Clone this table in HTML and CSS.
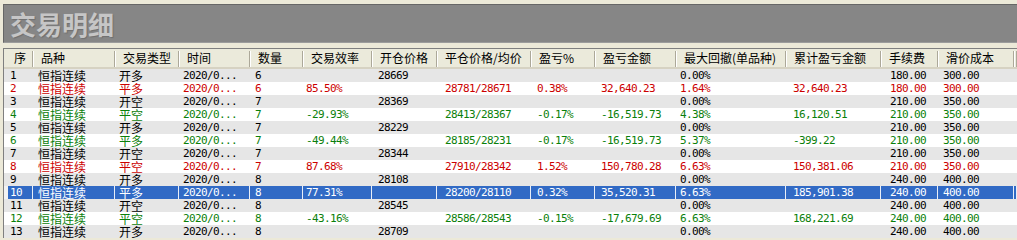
FILE: index.html
```html
<!DOCTYPE html>
<html lang="zh-CN">
<head>
<meta charset="utf-8">
<title>交易明细</title>
<link rel="stylesheet" href="styles.css">
</head>
<body>
<div class="window">
  <div class="title">交易明细</div>
  <div class="grid-wrap">
    <table class="grid">
      <colgroup>
        <col class="w1"><col class="w2"><col class="w3"><col class="w4"><col class="w5"><col class="w6"><col class="w7"><col class="w8"><col class="w9"><col class="w10"><col class="w11"><col class="w12"><col class="w13"><col class="w14"><col class="w15">
      </colgroup>
      <thead>
        <tr><th>序</th><th>品种</th><th>交易类型</th><th>时间</th><th>数量</th><th>交易效率</th><th>开仓价格</th><th>平仓价格/均价</th><th>盈亏%</th><th>盈亏金额</th><th>最大回撤(单品种)</th><th>累计盈亏金额</th><th>手续费</th><th>滑价成本</th><th></th></tr>
      </thead>
      <tbody>
        <tr class="g"><td>1</td><td class="cn">恒指连续</td><td class="cn">开多</td><td>2020/0...</td><td>6</td><td></td><td>28669</td><td></td><td></td><td></td><td>0.00%</td><td></td><td>180.00</td><td>300.00</td><td></td></tr>
        <tr class="w up"><td>2</td><td class="cn">恒指连续</td><td class="cn">平多</td><td>2020/0...</td><td>6</td><td>85.50%</td><td></td><td>28781/28671</td><td>0.38%</td><td>32,640.23</td><td>1.64%</td><td>32,640.23</td><td>180.00</td><td>300.00</td><td></td></tr>
        <tr class="g"><td>3</td><td class="cn">恒指连续</td><td class="cn">开空</td><td>2020/0...</td><td>7</td><td></td><td>28369</td><td></td><td></td><td></td><td>0.00%</td><td></td><td>210.00</td><td>350.00</td><td></td></tr>
        <tr class="w down"><td>4</td><td class="cn">恒指连续</td><td class="cn">平空</td><td>2020/0...</td><td>7</td><td>-29.93%</td><td></td><td>28413/28367</td><td>-0.17%</td><td>-16,519.73</td><td>4.38%</td><td>16,120.51</td><td>210.00</td><td>350.00</td><td></td></tr>
        <tr class="g"><td>5</td><td class="cn">恒指连续</td><td class="cn">开多</td><td>2020/0...</td><td>7</td><td></td><td>28229</td><td></td><td></td><td></td><td>0.00%</td><td></td><td>210.00</td><td>350.00</td><td></td></tr>
        <tr class="w down"><td>6</td><td class="cn">恒指连续</td><td class="cn">平多</td><td>2020/0...</td><td>7</td><td>-49.44%</td><td></td><td>28185/28231</td><td>-0.17%</td><td>-16,519.73</td><td>5.37%</td><td>-399.22</td><td>210.00</td><td>350.00</td><td></td></tr>
        <tr class="g"><td>7</td><td class="cn">恒指连续</td><td class="cn">开空</td><td>2020/0...</td><td>7</td><td></td><td>28344</td><td></td><td></td><td></td><td>0.00%</td><td></td><td>210.00</td><td>350.00</td><td></td></tr>
        <tr class="w up"><td>8</td><td class="cn">恒指连续</td><td class="cn">平空</td><td>2020/0...</td><td>7</td><td>87.68%</td><td></td><td>27910/28342</td><td>1.52%</td><td>150,780.28</td><td>6.63%</td><td>150,381.06</td><td>210.00</td><td>350.00</td><td></td></tr>
        <tr class="g"><td>9</td><td class="cn">恒指连续</td><td class="cn">开多</td><td>2020/0...</td><td>8</td><td></td><td>28108</td><td></td><td></td><td></td><td>0.00%</td><td></td><td>240.00</td><td>400.00</td><td></td></tr>
        <tr class="sel"><td>10</td><td class="cn">恒指连续</td><td class="cn">平多</td><td>2020/0...</td><td>8</td><td>77.31%</td><td></td><td>28200/28110</td><td>0.32%</td><td>35,520.31</td><td>6.63%</td><td>185,901.38</td><td>240.00</td><td>400.00</td><td></td></tr>
        <tr class="g"><td>11</td><td class="cn">恒指连续</td><td class="cn">开空</td><td>2020/0...</td><td>8</td><td></td><td>28545</td><td></td><td></td><td></td><td>0.00%</td><td></td><td>240.00</td><td>400.00</td><td></td></tr>
        <tr class="w down"><td>12</td><td class="cn">恒指连续</td><td class="cn">平空</td><td>2020/0...</td><td>8</td><td>-43.16%</td><td></td><td>28586/28543</td><td>-0.15%</td><td>-17,679.69</td><td>6.63%</td><td>168,221.69</td><td>240.00</td><td>400.00</td><td></td></tr>
        <tr class="g"><td>13</td><td class="cn">恒指连续</td><td class="cn">开多</td><td>2020/0...</td><td>8</td><td></td><td>28709</td><td></td><td></td><td></td><td>0.00%</td><td></td><td>240.00</td><td>400.00</td><td></td></tr>
      </tbody>
    </table>
  </div>
</div>
</body>
</html>
```
FILE: styles.css
```css
html, body {
  margin: 0;
  padding: 0;
  background: #ece9d8;
  overflow: hidden;
}

.window {
  width: 1017px;
  height: 240px;
  overflow: hidden;
}

.title {
  margin: 4px 0 0 3px;
  height: 37px;
  padding-left: 6px;
  background: #868686;
  border-top: 1px solid #666666;
  border-left: 1px solid #666666;
  border-bottom: 1px solid #9c9c9c;
  color: #c6c6c6;
  font: 700 26px/37px "Noto Sans CJK SC", sans-serif;
  text-shadow: 1px 1px 1px #707070;
  letter-spacing: 0;
}

.grid-wrap {
  margin: 5px 0 0 3px;
  border-top: 1px solid #7f7f7f;
  border-left: 1px solid #7f7f7f;
  background: #ffffff;
}

.grid {
  border-collapse: separate;
  border-spacing: 0;
  table-layout: fixed;
  width: 1013px;
}

.w1 { width: 29px; }
.w2 { width: 82px; }
.w3 { width: 64px; }
.w4 { width: 71px; }
.w5 { width: 53px; }
.w6 { width: 69px; }
.w7 { width: 65px; }
.w8 { width: 94px; }
.w9 { width: 64px; }
.w10 { width: 81px; }
.w11 { width: 110px; }
.w12 { width: 95px; }
.w13 { width: 57px; }
.w14 { width: 76px; }
.w15 { width: 3px; }

.grid th {
  height: 18px;
  padding: 0 0 0 8px;
  border-bottom: 2px solid #d6d2c2;
  text-align: left;
  font: 400 12px/18px "Noto Sans CJK SC", sans-serif;
  color: #000;
  white-space: nowrap;
  background:
    linear-gradient(#aca899, #aca899) no-repeat 100% 2px / 1px 16px,
    linear-gradient(#ffffff, #ffffff) no-repeat 0 2px / 1px 16px,
    #ebeadb;
}

.grid th:first-child {
  padding-left: 10px;
  background:
    linear-gradient(#aca899, #aca899) no-repeat 100% 2px / 1px 16px,
    #ebeadb;
}

.grid td {
  height: 13px;
  padding: 0 0 0 5px;
  font-family: "DejaVu Sans Mono", "Liberation Mono", monospace;
  font-size: 11px;
  line-height: 13px;
  letter-spacing: -0.62px;
  color: #000;
  white-space: nowrap;
}

.grid td.cn {
  font-family: "Noto Sans CJK SC", sans-serif;
  font-size: 12px;
  line-height: 13px;
  letter-spacing: 0;
}

.grid td:nth-child(1) { padding-left: 6px; }
.grid td:nth-child(2) { padding-left: 5px; }
.grid td:nth-child(3) { padding-left: 4px; }
.grid td:nth-child(4) { padding-left: 4px; }
.grid td:nth-child(5) { padding-left: 5px; }
.grid td:nth-child(6) { padding-left: 3px; }
.grid td:nth-child(7) { padding-left: 6px; }
.grid td:nth-child(8) { padding-left: 8px; }
.grid td:nth-child(9) { padding-left: 6px; }
.grid td:nth-child(10) { padding-left: 6px; }
.grid td:nth-child(11) { padding-left: 4px; }
.grid td:nth-child(12) { padding-left: 7px; }
.grid td:nth-child(13) { padding-left: 9px; }
.grid td:nth-child(14) { padding-left: 5px; }
.grid td:nth-child(15) { padding-left: 0; }

.grid tr.g td { background: #e6e6e6; }
.grid tr.w td { background: #ffffff; }

.grid tr.up td { color: #cc0000; }
.grid tr.down td { color: #0a800a; }

.grid tr.sel td {
  background: #316ac5;
  color: #ffffff;
  box-shadow: inset -1px 0 #e8eef8;
}

.grid tr.sel td:first-child {
  background: linear-gradient(to right, #f2f2f2 4px, #316ac5 4px);
}
```
